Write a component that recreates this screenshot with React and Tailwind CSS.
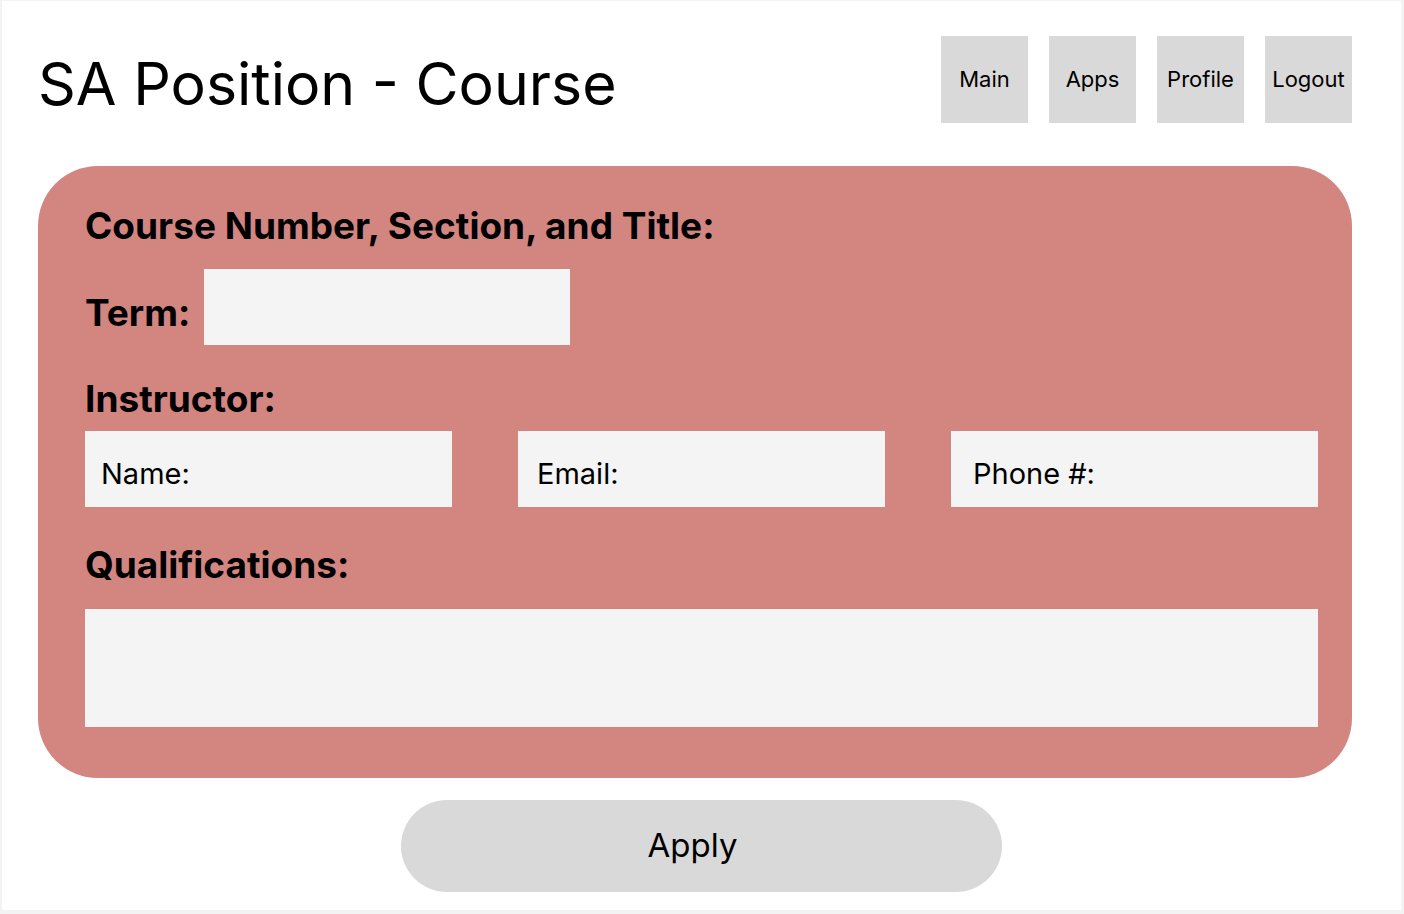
export default function App() {
  const font = { fontFamily: "Inter, 'Noto Sans', sans-serif" };
  const navItems = ["Main", "Apps", "Profile", "Logout"];
  return (
    <div className="w-[1404px] h-[914px] bg-[#f3f3f3] pt-[1px] pl-[2px] text-black" style={font}>
      <div className="w-[1399px] h-[909px] bg-white flex flex-col">
        <div className="pl-[36px] pr-[49px] pt-[35px]">
          <div className="flex justify-between items-start">
            <h1 className="mt-[12px] text-[59px] leading-[72px] font-normal">SA Position - Course</h1>
            <div className="flex gap-[21px]">
              {navItems.map((n) => (
                <div key={n} className="w-[87px] h-[87px] bg-[#d9d9d9] flex items-center justify-center text-[22px]">
                  {n}
                </div>
              ))}
            </div>
          </div>
          <div className="mt-[43px] bg-[#d38580] rounded-[60px] h-[612px] pl-[47px] pr-[34px] pt-[38px] flex flex-col">
            <div className="text-[37px] leading-[44px] font-bold">Course Number, Section, and Title:</div>
            <div className="mt-[21px] flex items-center h-[76px]">
              <div className="text-[37px] leading-[44px] font-bold mt-[12px]">Term:</div>
              <div className="ml-[14px] w-[366px] h-[76px] bg-[#f4f4f4]"></div>
            </div>
            <div className="mt-[32px] text-[37px] leading-[44px] font-bold">Instructor:</div>
            <div className="mt-[10px] flex justify-between">
              <div className="w-[367px] h-[76px] bg-[#f4f4f4] flex items-center pl-[16px] pt-[10px] text-[29px]">Name:</div>
              <div className="w-[367px] h-[76px] bg-[#f4f4f4] flex items-center pl-[19px] pt-[10px] text-[29px]">Email:</div>
              <div className="w-[367px] h-[76px] bg-[#f4f4f4] flex items-center pl-[22px] pt-[10px] text-[29px]">Phone #:</div>
            </div>
            <div className="mt-[36px] text-[37px] leading-[44px] font-bold">Qualifications:</div>
            <div className="mt-[22px] h-[118px] bg-[#f4f4f4]"></div>
          </div>
        </div>
        <div className="mt-[22px] flex justify-center">
          <button className="w-[601px] h-[92px] rounded-full bg-[#d9d9d9] text-[33px] flex items-center justify-center pr-[18px]">
            Apply
          </button>
        </div>
      </div>
    </div>
  );
}
